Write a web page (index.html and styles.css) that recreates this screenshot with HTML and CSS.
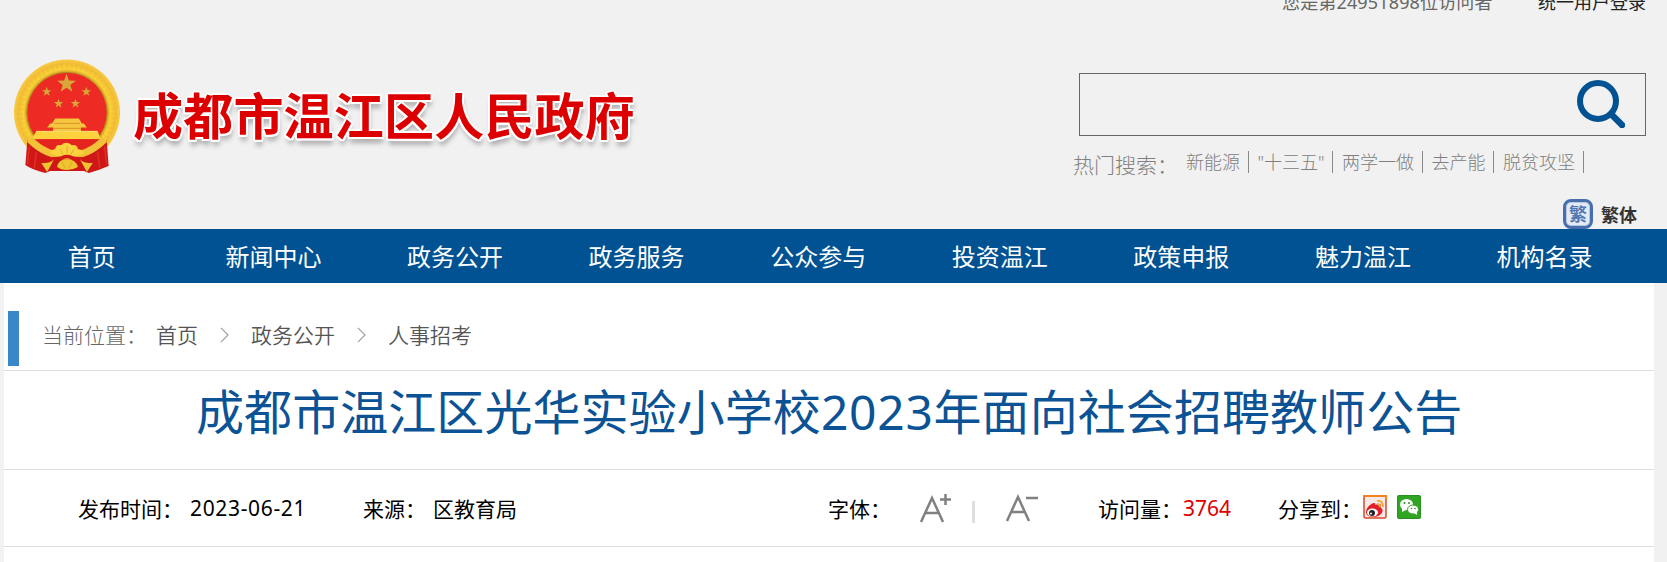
FILE: index.html
```html
<!DOCTYPE html>
<html lang="zh-CN">
<head>
<meta charset="utf-8">
<title>成都市温江区人民政府</title>
<link rel="stylesheet" href="styles.css">
</head>
<body>
<header class="header">
  <div class="brand">
    <svg class="emblem" viewBox="0 0 110 116" aria-hidden="true">
      <defs>
        <radialGradient id="gold" cx="50%" cy="50%" r="50%"><stop offset=".75" stop-color="#c99a23"/><stop offset=".82" stop-color="#fbd338"/><stop offset=".92" stop-color="#f3bd35"/><stop offset="1" stop-color="#f6cb45"/></radialGradient>
        <path id="star" d="M0-10 2.4-3.2 9.5-3.1 3.8 1.2 5.9 8.1 0 4-5.9 8.1-3.8 1.2-9.5-3.1-2.4-3.2Z"/>
      </defs>
      <circle cx="55" cy="54" r="53.5" fill="url(#gold)"/>
      <circle cx="55" cy="54" r="47" fill="none" stroke="#e5aa2c" stroke-width="6" stroke-dasharray="2 3" opacity=".2"/>
      <circle cx="55" cy="54" r="40.5" fill="#ee2a24" stroke="#b98521" stroke-width="1"/>
      <g fill="#d9a63a">
        <use href="#star" transform="translate(54.500 25)"/>
        <use href="#star" transform="translate(34.500 33) scale(.5)"/>
        <use href="#star" transform="translate(74.500 33) scale(.5)"/>
        <use href="#star" transform="translate(46.500 45) scale(.5)"/>
        <use href="#star" transform="translate(63.500 45) scale(.5)"/>
      </g>
      <path d="M43 60h24l3 5H40zM38 65h34l3 4H35zM41 69h28v4H41z" fill="#f4c63e"/>
      <path d="M42 65h26M41 70h28" stroke="#d68a24" stroke-width=".8"/>
      <path d="M24 73h62l3 8H19z" fill="#fdd23c"/>
      <path d="M24 73h62" stroke="#f8e173"/>
      <path d="M19 81h70q-12 14-34 14T19 81z" fill="#e52420"/>
      <path d="M15 82Q30 97 55 98T95 82L97 108Q88 112 77 115L72 113H38L33 115Q20 112 13 107z" fill="#cf1717"/>
      <path d="M17 88 15 106M24 94 22 110M93 88 95 106M86 94 88 110" stroke="#e2301f" stroke-width="1.500"/>
      <path d="M17 81Q34 98 55 98T93 81" fill="none" stroke="#f2c138" stroke-width="7"/>
      <path d="M38 95q1-4 5-4 1-5 6-4 5-5 11 0 5-1 6 4 5 0 6 4l-11 4q-6-4-12 0z" fill="#fbd33e"/>
      <path d="M34 99q10 0 15-1 6-3 12 0 5 1 15 1-8 5-15 3-6-4-12 0-7 2-15-3z" fill="#d31a18"/>
      <path d="M45 109q1-8 10-8t11 8q-5 3-11 3t-10-3zM29 105q10 0 13-4l-7 13zM81 105q-10 0-13-4l7 13z" fill="#f0c331"/>
      <path d="M48 91l3 5M55 88v7M62 91l-3 5M50 104l3 6M60 104l-3 6" stroke="#d9a02a" stroke-width=".8"/>
    </svg>
    <h1 class="brand-name">成都市温江区人民政府</h1>
  </div>
  <div class="tools">
    <div class="topbar"><span class="visitor">您是第24951898位访问者</span><a class="login">统一用户登录</a></div>
    <div class="search">
      <svg class="search-icon" viewBox="0 0 48 48"><circle cx="21" cy="21" r="18" fill="none" stroke="#005293" stroke-width="6"/><path d="M34 34 45 45" stroke="#005293" stroke-width="6.500" stroke-linecap="round"/></svg>
    </div>
    <div class="hot">
      <span class="hot-label">热门搜索：</span>
      <a class="hot-item">新能源</a><a class="hot-item">"十三五"</a><a class="hot-item">两学一做</a><a class="hot-item">去产能</a><a class="hot-item">脱贫攻坚</a>
    </div>
    <div class="lang"><span class="lang-icon">繁</span><span>繁体</span></div>
  </div>
</header>
<nav class="nav">
  <a>首页</a><a>新闻中心</a><a>政务公开</a><a>政务服务</a><a>公众参与</a><a>投资温江</a><a>政策申报</a><a>魅力温江</a><a>机构名录</a>
</nav>
<main class="page">
  <div class="crumbs">
    <span class="crumb-label">当前位置：</span>
    <a>首页</a>
    <svg class="chev" viewBox="0 0 10 18"><path d="M1 1 9 9 1 17"/></svg>
    <a>政务公开</a>
    <svg class="chev" viewBox="0 0 10 18"><path d="M1 1 9 9 1 17"/></svg>
    <a>人事招考</a>
  </div>
  <h2 class="title">成都市温江区光华实验小学校<span class="year">2023</span>年面向社会招聘教师公告</h2>
  <div class="meta">
    <span>发布时间：</span>
    <span class="date">2023-06-21</span>
    <span>来源：</span>
    <span>区教育局</span>
    <span>字体：</span>
    <svg class="sizes" viewBox="0 0 120 32" fill="none" stroke="#808080" stroke-width="2.500">
      <path d="M1 30 12 6 23 30M5 21H19"/><path d="M20 7.500h11M25.500 2v11" stroke-width="2.500"/>
      <path d="M53.500 9v22" stroke="#dedede" stroke-width="3"/>
      <path d="M87 29 98 5 109 29M91 20H105"/><path d="M106 6h12" stroke-width="2.500"/>
    </svg>
    <span>访问量：</span>
    <span class="visits">3764</span>
    <span>分享到：</span>
    <svg class="share" viewBox="0 0 24 24">
      <rect x="1" y="1" width="22" height="22" rx="1.500" fill="#f7e9e5" stroke="#d9482b" stroke-width="1.500"/>
      <path d="M1 2V1h22v3" fill="none" stroke="#f58220" stroke-width="2"/>
      <path d="M3 17c0-5 6-9 8-9 2 0 1 2 1 2s5-2 6 0c0 2-1 2 0 3 4 2 0 9-7 9-5 0-8-2-8-5z" fill="#e11f26"/>
      <ellipse cx="9.500" cy="17.500" rx="5.500" ry="4" fill="#fff"/><circle cx="9" cy="18" r="3" fill="#222"/><circle cx="8" cy="18.500" r="1" fill="#fff"/>
      <path d="M14 6q6-1 6 6M14 9q3 0 3 3" fill="none" stroke="#f6a53b" stroke-width="1.800"/>
    </svg>
    <svg class="share" viewBox="0 0 24 24">
      <rect width="24" height="24" rx="2" fill="#28901f"/><rect x="1" y="1" width="22" height="22" rx="1.500" fill="#2fa522"/>
      <ellipse cx="9.500" cy="9.500" rx="6.500" ry="5.500" fill="#fff"/><path d="M5 13v4l4-2z" fill="#fff"/>
      <ellipse cx="16" cy="14.500" rx="5.500" ry="4.500" fill="#fff" stroke="#2fa522"/><path d="M17 18l3 2v-3z" fill="#fff"/>
      <g fill="#2a8d22"><circle cx="7.500" cy="8" r="1"/><circle cx="12" cy="8" r="1"/><circle cx="14.500" cy="13.500" r=".8"/><circle cx="18" cy="13.500" r=".8"/></g>
    </svg>
  </div>
</main>
</body>
</html>
```
FILE: styles.css
```css
* { box-sizing: border-box; }
body {
  margin: 0;
  height: 562px;
  overflow: hidden;
  background: #f1f1f1;
  font-family: "Noto Sans", "Noto Sans CJK SC", sans-serif;
  white-space: nowrap;
}
h1, h2 { margin: 0; }
svg { display: block; }
.header { display: flex; justify-content: space-between; height: 229px; }
.brand { display: flex; align-items: flex-start; padding: 59px 0 0 12px; }
.emblem { width: 110px; height: 115px; }
.brand-name {
  margin: 18px 0 0 11px;
  font: bold 50px/72px "Noto Sans CJK SC", sans-serif;
  letter-spacing: .2px;
  color: #d00;
  text-shadow: 2px 0 #fff, -2px 0 #fff, 0 2px #fff, 0 -2px #fff, 1.500px 1.500px #fff, -1.500px 1.500px #fff, 1.500px -1.500px #fff, -1.500px -1.500px #fff, 1px 6px 5px #aaa;
}
.tools { width: 594px; }
.topbar { display: grid; grid-template-columns: 256px 1fr; margin: -11px 0 0 209px; height: 26px; font-size: 18px; line-height: 26px; color: #666; }
.visitor { letter-spacing: .15px; }
.login { color: #222; }
.search { display: flex; justify-content: flex-end; width: 567px; height: 63px; margin: 58px 0 0 6px; padding: 6px 20px 0 0; border: 1px solid #666; }
.search-icon { width: 48px; height: 48px; }
.hot { display: flex; height: 22px; margin-top: 15px; color: #808080; font-size: 18px; line-height: 23px; font-weight: 300; }
.hot-label { width: 104px; font-size: 21px; line-height: 29px; }
.hot-item { padding: 0 7.500px 0 9px; border-right: 1px solid #888; }
.lang { display: flex; gap: 8px; margin: 26px 0 0 490px; height: 30px; line-height: 32px; font-size: 18px; font-weight: bold; color: #333; }
.lang-icon { width: 30px; height: 30px; border: 3px solid #476fae; border-radius: 8px; background: #e4eaf3; color: #5278b2; font-size: 18px; line-height: 24px; text-align: center; box-shadow: inset 0 0 0 1px #b8c8df; }
.nav { display: grid; grid-template-columns: repeat(9, 181.600px); height: 54px; padding-left: 1px; background: #005293; color: #fff; font-size: 24px; line-height: 55px; text-align: center; }
.page { width: 1650px; height: 279px; margin-left: 4px; background: #fff; }
.crumbs { display: flex; align-items: center; height: 88px; padding-top: 14px; border-bottom: 1px solid #ddd; font-size: 21px; color: #555; font-weight: 350; }
.crumbs::before { content: ""; width: 11px; height: 55px; margin: 9px 0 0 4px; background: #3986c8; }
.crumb-label { width: 114px; margin-left: 23px; color: #666; font-weight: 300; }
.chev { width: 9px; height: 16px; margin: 2px 22px 0; fill: none; stroke: #999; stroke-width: 1.200; }
.title { height: 99px; padding-left: 192px; border-bottom: 1px solid #ddd; font-size: 48px; line-height: 82px; font-weight: 400; letter-spacing: .07px; color: #0b5394; }
.year { letter-spacing: .7px; }
.meta { display: grid; grid-template-columns: 112px 173px 70px 395px 92px 178px 85px 95px 85px 34px 24px; align-items: center; height: 77px; padding-left: 74px; border-bottom: 1px solid #ddd; font-size: 21px; color: #000; }
.date { letter-spacing: .65px; }
.sizes { width: 120px; height: 32px; }
.visits { color: #d00; }
.share { width: 24px; height: 24px; margin-top: -2px; }
```
